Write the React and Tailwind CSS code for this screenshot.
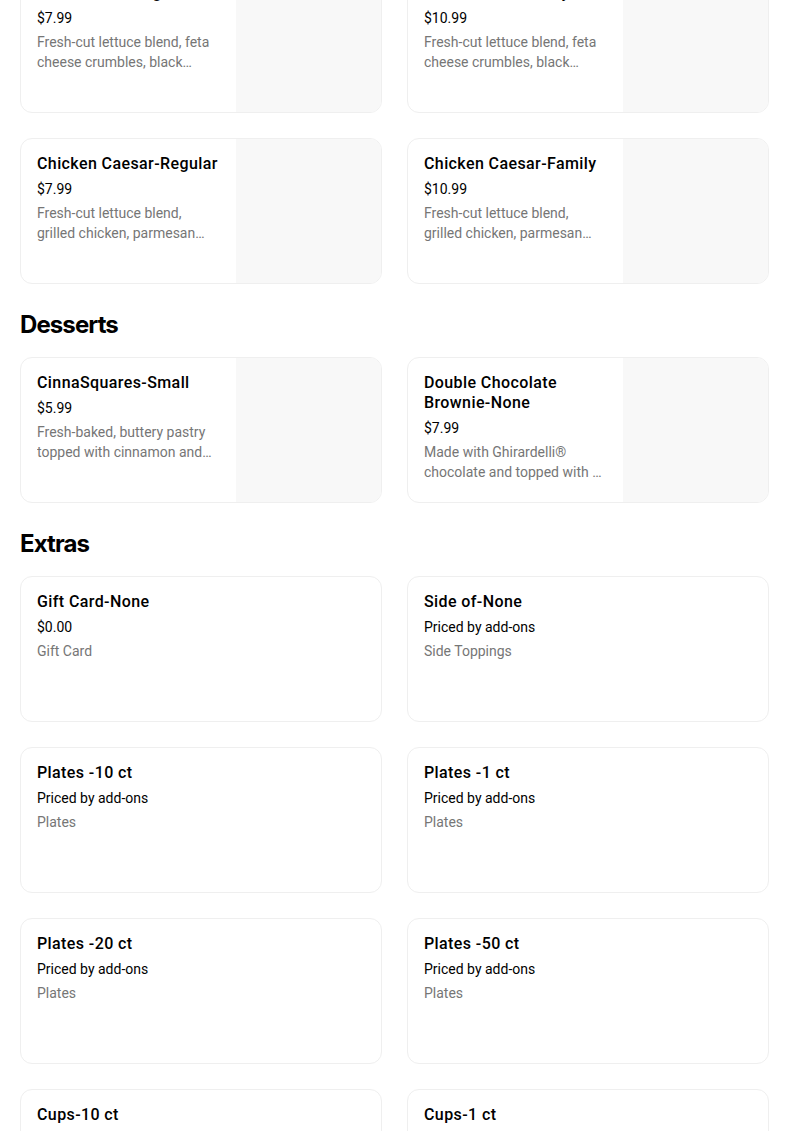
import React from 'react';

const rows = [
  {
    section: null,
    items: [
      [
        { title: 'Greek Salad-Regular', price: '$7.99', desc: 'Fresh-cut lettuce blend, feta cheese crumbles, black olives, tomatoes and Greek dressing', img: true },
        { title: 'Greek Salad-Family', price: '$10.99', desc: 'Fresh-cut lettuce blend, feta cheese crumbles, black olives, tomatoes and Greek dressing', img: true },
      ],
      [
        { title: 'Chicken Caesar-Regular', price: '$7.99', desc: 'Fresh-cut lettuce blend, grilled chicken, parmesan cheese, croutons and Caesar dressing', img: true },
        { title: 'Chicken Caesar-Family', price: '$10.99', desc: 'Fresh-cut lettuce blend, grilled chicken, parmesan cheese, croutons and Caesar dressing', img: true },
      ],
    ],
  },
  {
    section: 'Desserts',
    items: [
      [
        { title: 'CinnaSquares-Small', price: '$5.99', desc: 'Fresh-baked, buttery pastry topped with cinnamon and icing', img: true },
        { title: 'Double Chocolate Brownie-None', price: '$7.99', desc: 'Made with Ghirardelli® chocolate and topped with a chocolate drizzle', img: true },
      ],
    ],
  },
  {
    section: 'Extras',
    items: [
      [
        { title: 'Gift Card-None', price: '$0.00', desc: 'Gift Card' },
        { title: 'Side of-None', price: 'Priced by add-ons', desc: 'Side Toppings' },
      ],
      [
        { title: 'Plates -10 ct', price: 'Priced by add-ons', desc: 'Plates' },
        { title: 'Plates -1 ct', price: 'Priced by add-ons', desc: 'Plates' },
      ],
      [
        { title: 'Plates -20 ct', price: 'Priced by add-ons', desc: 'Plates' },
        { title: 'Plates -50 ct', price: 'Priced by add-ons', desc: 'Plates' },
      ],
      [
        { title: 'Cups-10 ct', price: 'Priced by add-ons', desc: 'Cups' },
        { title: 'Cups-1 ct', price: 'Priced by add-ons', desc: 'Cups' },
      ],
    ],
  },
];

const ItemCard = ({ item }) => (
  <div className="flex h-[146px] overflow-hidden rounded-xl border border-[#efefef] bg-white">
    <div className="flex min-w-0 flex-1 flex-col px-4 pt-[15px]">
      <div className="text-[16px] font-medium leading-5 tracking-[0.4px] text-black">{item.title}</div>
      <div className="mt-[5px] text-[14px] leading-5 text-black">{item.price}</div>
      <div className="mt-1 line-clamp-2 text-[14px] leading-5 text-[#767676]">{item.desc}</div>
    </div>
    {item.img && <div className="w-[145px] shrink-0 bg-[#f8f8f8]" />}
  </div>
);

export default function App() {
  return (
    <div className="h-[1131px] overflow-hidden bg-white font-['Roboto',sans-serif] text-black">
      <div className="-mt-[33px] ml-5 w-[749px]">
        {rows.map((group, gi) => (
          <div key={gi}>
            {group.section && (
              <h2 className="mt-[25px] mb-4 font-['Inter',sans-serif] text-[24px] font-bold leading-8 tracking-[-0.9px]">{group.section}</h2>
            )}
            <div className="flex flex-col gap-[25px]">
              {group.items.map((pair, ri) => (
                <div key={ri} className="grid grid-cols-2 gap-[25px]">
                  {pair.map((item) => (
                    <ItemCard key={item.title} item={item} />
                  ))}
                </div>
              ))}
            </div>
          </div>
        ))}
      </div>
    </div>
  );
}
